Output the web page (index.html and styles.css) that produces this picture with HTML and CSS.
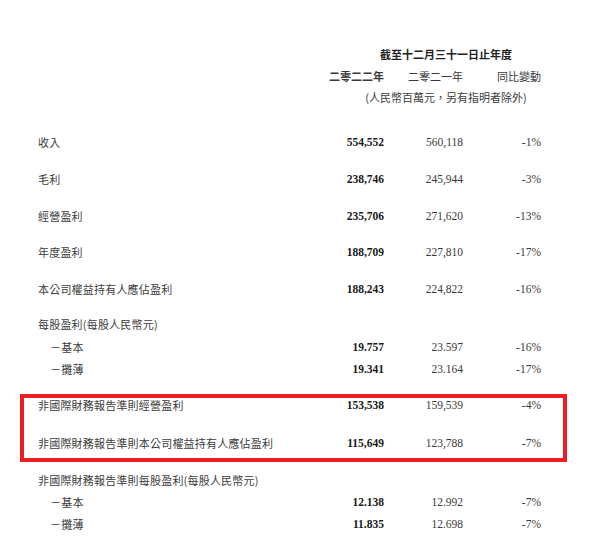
FILE: index.html
```html
<!DOCTYPE html>
<html lang="zh-Hant">
<head>
<meta charset="utf-8">
<link rel="stylesheet" href="styles.css">
</head>
<body>
<div class="page">
  <div class="head">
    <div class="row h1"><span class="span3 bold">截至十二月三十一日止年度</span></div>
    <div class="row h2"><span></span><span class="num bold cj">二零二二年</span><span class="num cj">二零二一年</span><span class="num cj">同比變動</span></div>
    <div class="row h3"><span class="span3">(人民幣百萬元，另有指明者除外)</span></div>
  </div>

  <div class="row major first"><span class="lbl">收入</span><span class="num b">554,552</span><span class="num">560,118</span><span class="num">-1%</span></div>
  <div class="row major"><span class="lbl">毛利</span><span class="num b">238,746</span><span class="num">245,944</span><span class="num">-3%</span></div>
  <div class="row major"><span class="lbl">經營盈利</span><span class="num b">235,706</span><span class="num">271,620</span><span class="num">-13%</span></div>
  <div class="row major tight"><span class="lbl">年度盈利</span><span class="num b">188,709</span><span class="num">227,810</span><span class="num">-17%</span></div>
  <div class="row major"><span class="lbl">本公司權益持有人應佔盈利</span><span class="num b">188,243</span><span class="num">224,822</span><span class="num">-16%</span></div>
  <div class="row major eps"><span class="lbl">每股盈利(每股人民幣元)</span></div>
  <div class="row sub"><span class="lbl ind">－基本</span><span class="num b">19.757</span><span class="num">23.597</span><span class="num">-16%</span></div>
  <div class="row"><span class="lbl ind">－攤薄</span><span class="num b">19.341</span><span class="num">23.164</span><span class="num">-17%</span></div>

  <div class="box">
    <div class="row boxrow"><span class="lbl">非國際財務報告準則經營盈利</span><span class="num b">153,538</span><span class="num">159,539</span><span class="num">-4%</span></div>
    <div class="row boxrow second"><span class="lbl">非國際財務報告準則本公司權益持有人應佔盈利</span><span class="num b">115,649</span><span class="num">123,788</span><span class="num">-7%</span></div>
  </div>

  <div class="row after"><span class="lbl">非國際財務報告準則每股盈利(每股人民幣元)</span></div>
  <div class="row"><span class="lbl ind">－基本</span><span class="num b">12.138</span><span class="num">12.992</span><span class="num">-7%</span></div>
  <div class="row"><span class="lbl ind">－攤薄</span><span class="num b">11.835</span><span class="num">12.698</span><span class="num">-7%</span></div>
</div>
</body>
</html>
```

FILE: styles.css
```css
html, body {
  margin: 0;
  padding: 0;
  background: #ffffff;
}

.page {
  width: 597px;
  height: 560px;
  overflow: hidden;
  padding-top: 43px;
  box-sizing: border-box;
  font-family: "Noto Sans CJK TC", "Noto Sans CJK SC", sans-serif;
  font-size: 11px;
  color: #3c3c3c;
}

.row {
  display: grid;
  grid-template-columns: 1fr 80px 79px 78px;
  padding: 0 56px 0 38px;
  height: 22px;
  line-height: 22px;
  align-items: center;
  white-space: nowrap;
}

.span3 {
  grid-column: 2 / 5;
  text-align: center;
  padding-left: 47px;
}

.h1 .span3 {
  color: #222;
}

.h3 {
  margin-top: -1px;
}

.bold {
  font-weight: 700;
  color: #222;
}

.lbl {
  grid-column: 1;
  letter-spacing: 0.2px;
}

.ind {
  padding-left: 12px;
}

.num {
  text-align: right;
  font-family: "Liberation Serif", serif;
  font-size: 11.5px;
  color: #3a3a3a;
}

.num.cj {
  font-family: "Noto Sans CJK TC", sans-serif;
  font-size: 11px;
}

.num.b {
  font-weight: 700;
  color: #1a1a1a;
}

.major {
  margin-top: 15px;
}

.major.first {
  margin-top: 23px;
}

.major.tight {
  margin-top: 14px;
}

.major.eps {
  margin-top: 13px;
}

.sub {
  margin-top: 1px;
}

.box {
  margin: 14px 30px 0 20px;
  border: 4px solid #ee1d25;
  padding: 0 0 8px 0;
}

.box .row {
  padding: 0 22px 0 14px;
  grid-template-columns: 1fr 80px 79px 78px;
  height: 14px;
  line-height: 14px;
}

.box .second {
  margin-top: 24px;
}

.after {
  margin-top: 7px;
}
```
